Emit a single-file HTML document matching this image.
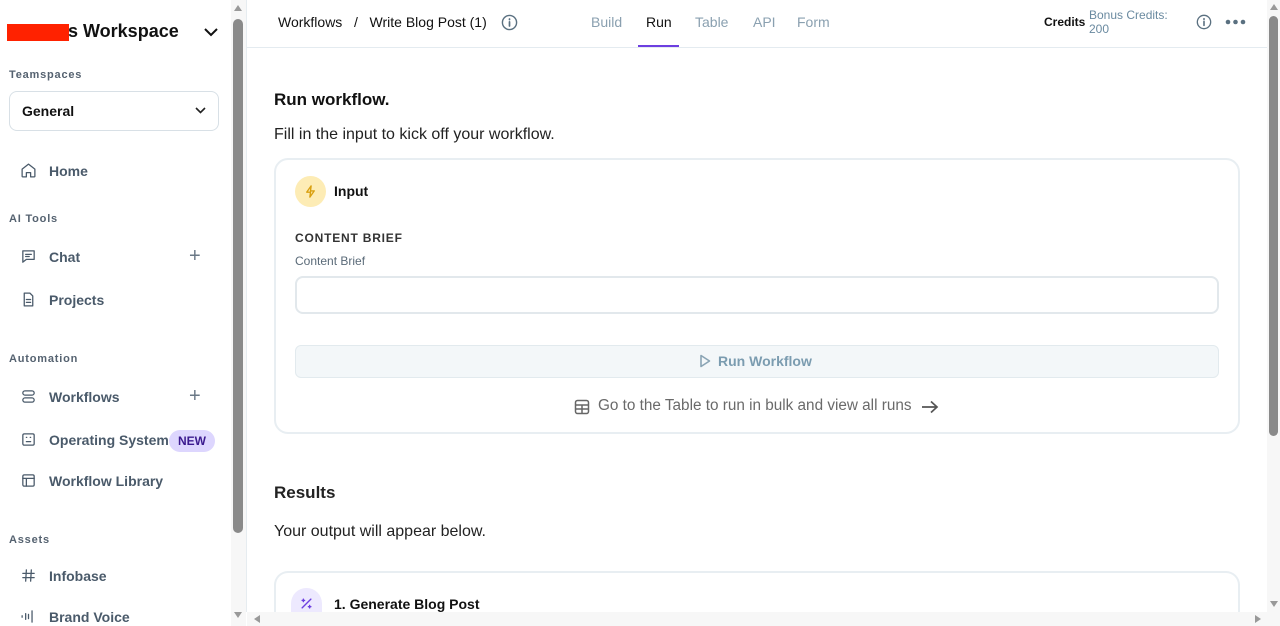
<!DOCTYPE html>
<html><head><meta charset="utf-8"><style>
*{margin:0;padding:0;box-sizing:border-box}
html{width:1280px;height:626px;overflow:hidden}
body{width:1280px;height:626px;overflow:hidden;background:#fff;font-family:"Liberation Sans",sans-serif;position:relative;color:#111}
.a{position:absolute}
.sec{font-size:11px;font-weight:bold;color:#556270;letter-spacing:.8px;left:9px}
.item{left:20px;font-size:14px;font-weight:bold;color:#4a5a6a;display:flex;align-items:center;gap:12px}
.item svg{width:17px;height:17px;fill:none;stroke:#4a5a6a;stroke-width:1.8;stroke-linecap:round;stroke-linejoin:round}
.plus{left:189px;font-size:20px;color:#6a7886;font-weight:normal}
.tab{top:14px;font-size:14px;color:#8aa0b0}
</style></head><body>
<div class="a" style="left:7px;top:24px;width:62px;height:17px;background:#ff2200"></div>
<div class="a" style="left:68px;top:21px;font-size:18px;font-weight:bold;color:#111">s Workspace</div>
<svg class="a" style="left:203px;top:25px" width="16" height="14" viewBox="0 0 16 14"><path d="M2 4l6 6 6-6" fill="none" stroke="#111" stroke-width="2"/></svg>
<div class="a sec" style="top:69px">Teamspaces</div>
<div class="a" style="left:9px;top:91px;width:210px;height:40px;border:1px solid #d8e0e6;border-radius:8px"></div>
<div class="a" style="left:22px;top:103px;font-size:14px;font-weight:bold">General</div>
<svg class="a" style="left:194px;top:105px" width="13" height="10" viewBox="0 0 13 10"><path d="M2 3l4.5 4.5L11 3" fill="none" stroke="#222" stroke-width="1.6"/></svg>
<div class="a item" style="top:162px"><svg viewBox="0 0 24 24"><path d="M3 10l9-7 9 7v10a1 1 0 0 1-1 1h-5v-6h-6v6H4a1 1 0 0 1-1-1z"/></svg>Home</div>
<div class="a sec" style="top:213px">AI Tools</div>
<div class="a item" style="top:248px"><svg viewBox="0 0 24 24"><path d="M4 4h16v12H9l-5 4z M8 9h8 M8 12h5"/></svg>Chat</div>
<div class="a plus" style="top:245px">+</div>
<div class="a item" style="top:291px"><svg viewBox="0 0 24 24"><path d="M6 3h8l4 4v14H6z M9 12h6 M9 16h6"/></svg>Projects</div>
<div class="a sec" style="top:353px">Automation</div>
<div class="a item" style="top:388px"><svg viewBox="0 0 24 24"><rect x="4" y="4" width="16" height="6" rx="3"/><rect x="4" y="14" width="16" height="6" rx="3"/></svg>Workflows</div>
<div class="a plus" style="top:385px">+</div>
<div class="a item" style="top:431px"><svg viewBox="0 0 24 24"><rect x="4" y="4" width="16" height="16" rx="2"/><path d="M9 9h.5 M14.5 9h.5 M9 15h6"/></svg>Operating System</div>
<div class="a" style="left:169px;top:430px;width:46px;height:22px;border-radius:11px;background:#ddd6fe;color:#3b1a8f;font-size:12px;font-weight:bold;text-align:center;line-height:22px">NEW</div>
<div class="a item" style="top:472px"><svg viewBox="0 0 24 24"><rect x="4" y="4" width="16" height="16" rx="2"/><path d="M4 9h16 M9 9v11"/></svg>Workflow Library</div>
<div class="a sec" style="top:534px">Assets</div>
<div class="a item" style="top:567px"><svg viewBox="0 0 24 24"><path d="M9 4L8 20 M16 4l-1 16 M4 9h16 M4 15h16"/></svg>Infobase</div>
<div class="a item" style="top:608px"><svg viewBox="0 0 24 24"><path d="M3 11v2 M8 8v8 M12 9v6 M17 4v16"/></svg>Brand Voice</div>
<div class="a" style="left:231px;top:0;width:15px;height:626px;background:#f7f7f7"></div>
<div class="a" style="left:233px;top:19px;width:10px;height:514px;border-radius:5px;background:#8a8a8a"></div>
<div class="a" style="left:234px;top:5px;width:0;height:0;border-left:4px solid transparent;border-right:4px solid transparent;border-bottom:6px solid #999"></div>
<div class="a" style="left:234px;top:612px;width:0;height:0;border-left:4px solid transparent;border-right:4px solid transparent;border-top:6px solid #999"></div>
<div class="a" style="left:246px;top:0;width:1px;height:612px;background:#e6ecf0"></div>
<div class="a" style="left:278px;top:14px;font-size:14px;color:#111">Workflows&nbsp;&nbsp;&nbsp;/&nbsp;&nbsp;&nbsp;Write Blog Post (1)</div>
<svg class="a" style="left:501px;top:14px" width="17" height="17" viewBox="0 0 24 24"><circle cx="12" cy="12" r="10" fill="none" stroke="#5a7080" stroke-width="2"/><path d="M12 11v6 M12 7v1" stroke="#5a7080" stroke-width="2.4" stroke-linecap="round"/></svg>
<div class="a tab" style="left:591px">Build</div>
<div class="a tab" style="left:646px;color:#111">Run</div>
<div class="a" style="left:638px;top:45px;width:41px;height:2px;background:#6d3fe0"></div>
<div class="a tab" style="left:695px">Table</div>
<div class="a tab" style="left:753px">API</div>
<div class="a tab" style="left:797px">Form</div>
<div class="a" style="left:1044px;top:15px;font-size:12px;font-weight:bold;color:#111">Credits</div>
<div class="a" style="left:1089px;top:8px;font-size:12px;color:#6a8aa0;line-height:14px">Bonus Credits:<br>200</div>
<svg class="a" style="left:1196px;top:14px" width="16" height="16" viewBox="0 0 24 24"><circle cx="12" cy="12" r="10" fill="none" stroke="#5a7080" stroke-width="2"/><path d="M12 11v6 M12 7v1" stroke="#5a7080" stroke-width="2.4" stroke-linecap="round"/></svg>
<svg class="a" style="left:1225px;top:18px" width="22" height="8"><circle cx="3" cy="4" r="2.3" fill="#5a7080"/><circle cx="10.5" cy="4" r="2.3" fill="#5a7080"/><circle cx="18" cy="4" r="2.3" fill="#5a7080"/></svg>
<div class="a" style="left:247px;top:47px;width:1020px;height:1px;background:#e4ebf0"></div>
<div class="a" style="left:274px;top:90px;font-size:17px;font-weight:bold">Run workflow.</div>
<div class="a" style="left:274px;top:126px;font-size:16px;color:#222">Fill in the input to kick off your workflow.</div>
<div class="a" style="left:274px;top:158px;width:966px;height:276px;border:2px solid #e8eef2;border-radius:14px"></div>
<div class="a" style="left:295px;top:176px;width:31px;height:31px;border-radius:50%;background:#fdecb5"></div>
<svg class="a" style="left:303px;top:184px" width="15" height="15" viewBox="0 0 24 24"><path d="M13 3L6 13h6l-1 8 7-10h-6z" fill="none" stroke="#d9a010" stroke-width="2.2" stroke-linejoin="round"/></svg>
<div class="a" style="left:334px;top:183px;font-size:14px;font-weight:bold">Input</div>
<div class="a" style="left:295px;top:231px;font-size:12px;font-weight:bold;letter-spacing:.8px;color:#333">CONTENT BRIEF</div>
<div class="a" style="left:295px;top:254px;font-size:12px;color:#5a6a78">Content Brief</div>
<div class="a" style="left:295px;top:276px;width:924px;height:38px;border:2px solid #e2e8ec;border-radius:8px"></div>
<div class="a" style="left:295px;top:345px;width:924px;height:33px;border:1px solid #e2eaee;border-radius:6px;background:#f3f7f9"></div>
<svg class="a" style="left:699px;top:354px" width="12" height="14" viewBox="0 0 12 14"><path d="M2 1.5l8.5 5.5L2 12.5z" fill="none" stroke="#8aa4b4" stroke-width="1.6" stroke-linejoin="round"/></svg>
<div class="a" style="left:718px;top:353px;font-size:14px;font-weight:bold;color:#7b9cb0">Run Workflow</div>
<svg class="a" style="left:574px;top:399px" width="16" height="16" viewBox="0 0 16 16"><rect x="1.5" y="1.5" width="13" height="13" rx="2" fill="none" stroke="#666" stroke-width="1.5"/><path d="M1.5 6h13 M1.5 10h13 M8 6v8.5" stroke="#666" stroke-width="1.5"/></svg>
<div class="a" style="left:598px;top:397px;font-size:15.3px;color:#6a6a6a;white-space:nowrap">Go to the Table to run in bulk and view all runs</div>
<svg class="a" style="left:921px;top:400px" width="18" height="14" viewBox="0 0 18 14"><path d="M1 7h15 M10 1.5L16 7l-6 5.5" fill="none" stroke="#555" stroke-width="1.7"/></svg>
<div class="a" style="left:274px;top:483px;font-size:17px;font-weight:bold;color:#222">Results</div>
<div class="a" style="left:274px;top:523px;font-size:16px;color:#222">Your output will appear below.</div>
<div class="a" style="left:274px;top:571px;width:966px;height:41px;border:2px solid #e8eef2;border-bottom:none;border-radius:14px 14px 0 0"></div>
<div class="a" style="left:291px;top:588px;width:31px;height:24px;border-radius:16px 16px 0 0;background:#ede9fe"></div>
<svg class="a" style="left:299px;top:596px" width="15" height="15" viewBox="0 0 24 24"><path d="M5 19L19 5 M5 7h4 M7 5v4 M15 17h4 M17 15v4" fill="none" stroke="#6d3fe0" stroke-width="2.2" stroke-linecap="round"/></svg>
<div class="a" style="left:334px;top:596px;font-size:14px;font-weight:bold">1. Generate Blog Post</div>
<div class="a" style="left:247px;top:612px;width:1033px;height:14px;background:#f7f7f7"></div>
<div class="a" style="left:254px;top:615px;width:0;height:0;border-top:4px solid transparent;border-bottom:4px solid transparent;border-right:6px solid #999"></div>
<div class="a" style="left:1255px;top:615px;width:0;height:0;border-top:4px solid transparent;border-bottom:4px solid transparent;border-left:6px solid #999"></div>
<div class="a" style="left:1267px;top:0;width:13px;height:612px;background:#f7f7f7"></div>
<div class="a" style="left:1269px;top:16px;width:9px;height:420px;border-radius:5px;background:#8a8a8a"></div>
<div class="a" style="left:1270px;top:4px;width:0;height:0;border-left:4px solid transparent;border-right:4px solid transparent;border-bottom:6px solid #999"></div>
<div class="a" style="left:1270px;top:601px;width:0;height:0;border-left:4px solid transparent;border-right:4px solid transparent;border-top:6px solid #999"></div>
</body></html>
